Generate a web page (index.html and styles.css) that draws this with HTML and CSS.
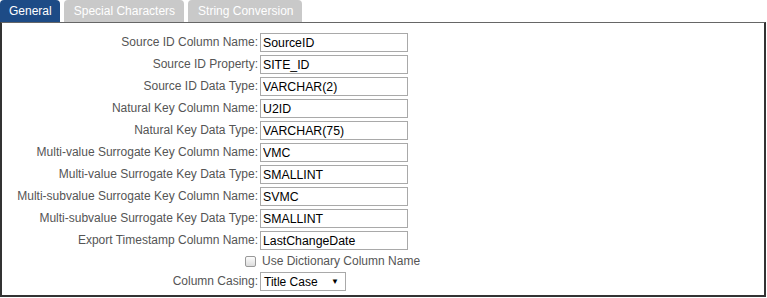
FILE: index.html
```html
<!DOCTYPE html>
<html>
<head>
<meta charset="utf-8">
<link rel="stylesheet" href="styles.css">
</head>
<body>
<div class="tabs">
  <div class="tab active">General</div>
  <div class="tab">Special Characters</div>
  <div class="tab">String Conversion</div>
</div>
<div class="panel">
  <div class="form">
    <label class="lbl">Source ID Column Name:</label><input class="txt" value="SourceID">
    <label class="lbl">Source ID Property:</label><input class="txt" value="SITE_ID">
    <label class="lbl">Source ID Data Type:</label><input class="txt" value="VARCHAR(2)">
    <label class="lbl">Natural Key Column Name:</label><input class="txt" value="U2ID">
    <label class="lbl">Natural Key Data Type:</label><input class="txt" value="VARCHAR(75)">
    <label class="lbl">Multi-value Surrogate Key Column Name:</label><input class="txt" value="VMC">
    <label class="lbl">Multi-value Surrogate Key Data Type:</label><input class="txt" value="SMALLINT">
    <label class="lbl">Multi-subvalue Surrogate Key Column Name:</label><input class="txt" value="SVMC">
    <label class="lbl">Multi-subvalue Surrogate Key Data Type:</label><input class="txt" value="SMALLINT">
    <label class="lbl">Export Timestamp Column Name:</label><input class="txt" value="LastChangeDate">
    <span class="chkcell"><span class="chk"></span></span><span class="chklbl">Use Dictionary Column Name</span>
    <label class="lbl">Column Casing:</label>
    <div class="sel"><span>Title Case</span><span class="arrow">▼</span></div>
  </div>
</div>
</body>
</html>
```
FILE: styles.css
```css
html, body {
  margin: 0;
  padding: 0;
  background: #fff;
  font-family: "Liberation Sans", Arial, sans-serif;
  font-size: 12px;
}
.tabs {
  display: flex;
  gap: 4px;
  height: 22px;
  align-items: flex-end;
}
.tab {
  height: 22px;
  box-sizing: border-box;
  padding: 3px 9px 0 10px;
  border-radius: 4px 4px 0 0;
  background: #c9c9c9;
  color: #fff;
  font-size: 12px;
  line-height: 17px;
}
.tab.active {
  background: #1d4b86;
  padding: 3px 8px 0 9px;
}
.panel {
  width: 766px;
  height: 275px;
  box-sizing: border-box;
  border: 2px solid #333;
  border-top: 1px solid #666;
  padding-top: 10px;
}
.form {
  display: grid;
  grid-template-columns: 256px 148px;
  grid-template-rows: repeat(10, 19px) 16px 19px;
  column-gap: 2px;
  row-gap: 3px;
  align-items: center;
}
.lbl {
  text-align: right;
  color: #555;
  line-height: 19px;
  white-space: nowrap;
}
.txt {
  width: 148px;
  height: 19px;
  box-sizing: border-box;
  border: 1px solid #a9a9a9;
  padding: 0 2px;
  margin: 0;
  font-family: "Liberation Sans", Arial, sans-serif;
  font-size: 12.3px;
  color: #000;
  outline: none;
}
.chkcell {
  display: flex;
  justify-content: flex-end;
  padding-right: 2px;
  height: 16px;
  align-items: center;
}
.chk {
  width: 11px;
  height: 11px;
  box-sizing: border-box;
  border: 1px solid #999;
  border-radius: 2px;
  background: linear-gradient(#fcfcfc, #dcdcdc);
}
.chklbl {
  color: #555;
  line-height: 16px;
  white-space: nowrap;
  padding-left: 2px;
}
.sel {
  width: 86px;
  height: 19px;
  box-sizing: border-box;
  border: 1px solid #a9a9a9;
  display: flex;
  align-items: center;
  justify-content: space-between;
  padding: 0 6px 0 3px;
  color: #000;
}
.arrow {
  font-size: 8px;
}
```
